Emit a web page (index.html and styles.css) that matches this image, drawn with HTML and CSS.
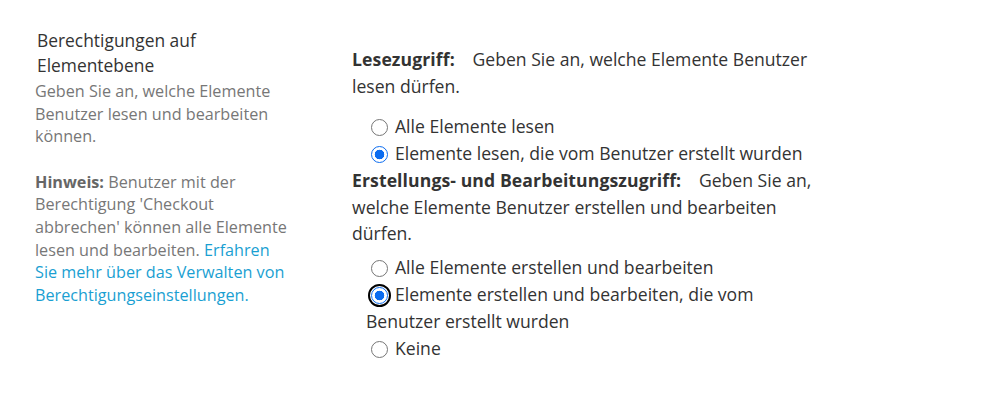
FILE: index.html
```html
<!DOCTYPE html>
<html lang="de">
<head>
    <meta charset="UTF-8">
    <meta name="viewport" content="width=device-width, initial-scale=1.0">
    <title>Berechtigungen auf Elementebene</title>
    <link rel="stylesheet" href="styles.css">
</head>
<body>
    <div class="section">
        <div class="desc-col">
            <h3 class="section-title">Berechtigungen auf Elementebene</h3>
            <div class="desc">Geben Sie an, welche Elemente Benutzer lesen und bearbeiten können.</div>
            <div class="desc note">
                <b>Hinweis:</b> Benutzer mit der Berechtigung 'Checkout abbrechen' können alle Elemente lesen und bearbeiten.
                <a href="#">Erfahren Sie mehr über das Verwalten von Berechtigungseinstellungen.</a>
            </div>
        </div>

        <div class="body-col">
            <div class="group">
                <div class="prompt"><b>Lesezugriff:</b>&nbsp;&nbsp; Geben Sie an, welche Elemente Benutzer lesen dürfen.</div>
                <div class="options">
                    <span class="option"><input type="radio" name="read" id="readAll"><label for="readAll">Alle Elemente lesen</label></span>
                    <span class="option"><input type="radio" name="read" id="readOwn" checked><label for="readOwn">Elemente lesen, die vom Benutzer erstellt wurden</label></span>
                </div>
            </div>

            <div class="group">
                <div class="prompt"><b>Erstellungs- und Bearbeitungszugriff:</b>&nbsp;&nbsp; Geben Sie an, welche Elemente Benutzer erstellen und bearbeiten dürfen.</div>
                <div class="options">
                    <span class="option"><input type="radio" name="write" id="writeAll"><label for="writeAll">Alle Elemente erstellen und bearbeiten</label></span>
                    <span class="option"><input type="radio" name="write" id="writeOwn" class="focused" checked><label for="writeOwn">Elemente erstellen und bearbeiten, die vom Benutzer erstellt wurden</label></span>
                    <span class="option"><input type="radio" name="write" id="writeNone"><label for="writeNone">Keine</label></span>
                </div>
            </div>
        </div>
    </div>
</body>
</html>
```

FILE: styles.css
```css
body {
    margin: 0;
    background-color: #fff;
    font-family: "Open Sans", "Noto Sans", sans-serif;
    color: #333;
}

.section {
    display: flex;
    padding: 28px 0 0 35px;
}

.desc-col {
    width: 258px;
    flex-shrink: 0;
}

.section-title {
    margin: 0 0 2px 0;
    padding-left: 2px;
    font-size: 17.4px;
    font-weight: normal;
    line-height: 25px;
    color: #333;
}

.desc {
    font-size: 16.2px;
    line-height: 22.6px;
    color: #777;
}

.desc b {
    color: #666;
}

.note {
    margin-top: 23px;
}

.note a {
    color: #1a9fd2;
    text-decoration: none;
}

.body-col {
    width: 472px;
    margin-left: 59px;
    padding-top: 18px;
}

.prompt {
    font-size: 17.6px;
    line-height: 26.5px;
}

.prompt b {
    margin-right: 4px;
    letter-spacing: 0.1px;
}

.options {
    margin-top: 14px;
    padding-left: 14px;
    font-size: 17.6px;
    line-height: 27px;
}

.group + .group .options {
    margin-top: 7px;
}

.option {
    display: block;
}

.option input {
    appearance: none;
    -webkit-appearance: none;
    width: 17px;
    height: 17px;
    margin: 0 7px 0 5px;
    border: 1px solid #767676;
    border-radius: 50%;
    background-color: #fff;
    vertical-align: -3px;
}

.option input:checked {
    border-color: #0b6cf0;
    background: radial-gradient(circle, #0b6cf0 0, #0b6cf0 4.5px, #fff 5.1px);
}

.option input.focused {
    outline: 2px solid #000;
    outline-offset: 1px;
}
```
